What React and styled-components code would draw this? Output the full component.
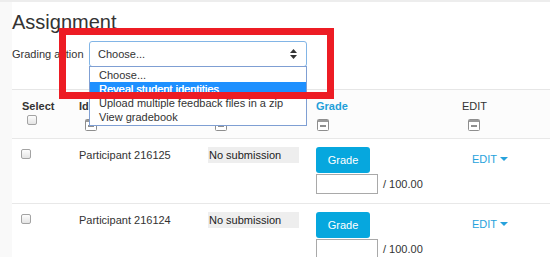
import React from "react";
import styled, { createGlobalStyle } from "styled-components";

const GlobalStyle = createGlobalStyle`
  body {
    margin: 0;
    background: #fff;
    font-family: "Liberation Sans", Arial, sans-serif;
    color: #333;
  }
`;

const participants = [
  { id: "216125", status: "No submission" },
  { id: "216124", status: "No submission" },
];

const options = [
  "Choose...",
  "Reveal student identities",
  "Upload multiple feedback files in a zip",
  "View gradebook",
];

const CollapseIcon = () => (
  <svg width="12" height="12" viewBox="0 0 12 12">
    <rect x="0.5" y="0.5" width="11" height="11" rx="1" fill="#fff" stroke="#8e8e8e" />
    <rect x="1" y="1" width="10" height="2" fill="#9a9a9a" />
    <rect x="3" y="6" width="6" height="2" fill="#8e8e8e" />
  </svg>
);

const SortArrows = () => (
  <svg width="7" height="10" viewBox="0 0 7 10">
    <path d="M3.5 0 L7 4 L0 4 Z" fill="#333" />
    <path d="M0 6 L7 6 L3.5 10 Z" fill="#333" />
  </svg>
);

const Caret = () => (
  <svg width="8" height="4" viewBox="0 0 8 4">
    <path d="M0 0 L8 0 L4 4 Z" fill="#27a2dc" />
  </svg>
);

const App = () => {
  return (
    <>
      <GlobalStyle />
      <Page>
        <Main>
          <Heading>Assignment</Heading>
          <ActionRow>
            <Label>Grading action</Label>
            <SelectWrap>
              <SelectBox>
                <span>Choose...</span>
                <SortArrows />
              </SelectBox>
              <Dropdown>
                {options.map((o, i) => (
                  <Option key={o} selected={i === 1}>
                    {o}
                  </Option>
                ))}
              </Dropdown>
            </SelectWrap>
          </ActionRow>

          <Table>
            <HeaderRow>
              <FirstCell>
                <HeadText>Select</HeadText>
                <Check style={{ marginLeft: 5 }} />
              </FirstCell>
              <Cell>
                <HeadText>Id</HeadText>
                <IconSlot offset={6}>
                  <CollapseIcon />
                </IconSlot>
              </Cell>
              <Cell>
                <HeadText />
                <IconSlot offset={7}>
                  <CollapseIcon />
                </IconSlot>
              </Cell>
              <Cell>
                <HeadText link>Grade</HeadText>
                <IconSlot offset={1}>
                  <CollapseIcon />
                </IconSlot>
              </Cell>
              <Cell>
                <HeadText plain>EDIT</HeadText>
                <IconSlot offset={6}>
                  <CollapseIcon />
                </IconSlot>
              </Cell>
            </HeaderRow>

            {participants.map((p) => (
              <BodyRow key={p.id}>
                <FirstCell>
                  <Check style={{ marginTop: 2, marginLeft: -1 }} />
                </FirstCell>
                <Cell>
                  <Text>Participant {p.id}</Text>
                </Cell>
                <Cell>
                  <Status>{p.status}</Status>
                </Cell>
                <Cell>
                  <GradeButton>Grade</GradeButton>
                  <GradeLine>
                    <GradeInput />
                    <OutOf>/ 100.00</OutOf>
                  </GradeLine>
                </Cell>
                <Cell>
                  <EditLink>
                    EDIT <Caret />
                  </EditLink>
                </Cell>
              </BodyRow>
            ))}
          </Table>
        </Main>
        <Highlight />
      </Page>
    </>
  );
};

const Page = styled.div`
  position: relative;
  height: 255px;
  overflow: hidden;
  background: #f9f9f9;
  border-top: 2px solid #ededed;
  padding-left: 12px;
`;

const Main = styled.div`
  background: #fff;
  height: 100%;
`;

const Heading = styled.h2`
  margin: 0;
  padding-top: 9px;
  font-size: 20px;
  line-height: 23px;
  font-weight: normal;
  color: #333;
`;

const ActionRow = styled.div`
  display: flex;
  align-items: center;
  height: 26px;
  margin-top: 7px;
`;

const Label = styled.label`
  font-size: 11px;
  width: 77px;
  color: #333;
`;

const SelectWrap = styled.div`
  position: relative;
  width: 218px;
  height: 26px;
`;

const SelectBox = styled.div`
  box-sizing: border-box;
  height: 26px;
  display: flex;
  align-items: center;
  justify-content: space-between;
  padding: 0 9px 0 8px;
  border: 1px solid #82b5e6;
  border-radius: 3px;
  font-size: 11px;
  color: #333;
  background: #fff;
`;

const Dropdown = styled.div`
  position: absolute;
  top: 25px;
  left: 0;
  width: 218px;
  box-sizing: border-box;
  border: 1px solid #7f9fd3;
  padding: 1px 0;
  background: #fff;
  z-index: 2;
`;

const Option = styled.div`
  height: 14px;
  line-height: 14px;
  padding-left: 9px;
  font-size: 11px;
  white-space: nowrap;
  color: ${(p) => (p.selected ? "#fff" : "#333")};
  background: ${(p) => (p.selected ? "#1e90ff" : "transparent")};
  text-shadow: ${(p) => (p.selected ? "0.3px 0 0 #fff" : "none")};
`;

const Table = styled.div`
  margin-top: 22px;
  border-top: 1px solid #e6e6e6;
`;

const Row = styled.div`
  display: grid;
  grid-template-columns: 67px 129px 108px 146px 1fr;
  border-bottom: 1px solid #e8e8e8;
`;

const HeaderRow = styled(Row)`
  box-sizing: border-box;
  height: 49px;
  padding-top: 10px;
  background: #fcfcfc;
`;

const BodyRow = styled(Row)`
  padding: 8px 0 9px;
  background: #fff;
`;

const Cell = styled.div`
  display: flex;
  flex-direction: column;
  align-items: flex-start;
`;

const FirstCell = styled(Cell)`
  padding-left: 10px;
`;

const HeadText = styled.div`
  height: 13px;
  font-size: 11px;
  line-height: 13px;
  font-weight: ${(p) => (p.plain ? "normal" : "bold")};
  color: ${(p) => (p.link ? "#1f9fd9" : "#333")};
  white-space: nowrap;
`;

const IconSlot = styled.div`
  margin-top: 4px;
  margin-left: ${(p) => p.offset}px;
  height: 12px;
`;

const Check = styled.span`
  display: block;
  box-sizing: border-box;
  width: 10px;
  height: 10px;
  margin-top: 2px;
  border: 1px solid #a3a3a3;
  border-radius: 2px;
  background: linear-gradient(#fdfdfd, #e4e4e4);
`;

const Text = styled.div`
  font-size: 11px;
  line-height: 16px;
  color: #333;
`;

const Status = styled.div`
  width: 90px;
  height: 16px;
  line-height: 16px;
  padding-left: 1px;
  font-size: 11px;
  color: #222;
  background: #eeeeee;
`;

const GradeButton = styled.div`
  width: 54px;
  height: 26px;
  line-height: 26px;
  text-align: center;
  font-size: 11px;
  color: #fff;
  background: #06a7de;
  border-radius: 3px;
`;

const GradeLine = styled.div`
  display: flex;
  align-items: center;
  margin-top: 1px;
`;

const GradeInput = styled.div`
  box-sizing: border-box;
  width: 62px;
  height: 20px;
  border: 1px solid #a9a9a9;
  background: #fff;
`;

const OutOf = styled.span`
  margin-left: 5px;
  font-size: 11px;
  color: #333;
`;

const EditLink = styled.div`
  display: flex;
  align-items: center;
  gap: 3px;
  margin-top: 4px;
  margin-left: 10px;
  font-size: 11px;
  line-height: 16px;
  color: #27a2dc;
`;

const Highlight = styled.div`
  position: absolute;
  left: 59px;
  top: 26px;
  width: 275px;
  height: 71px;
  box-sizing: border-box;
  border: 7px solid #ed1c24;
  z-index: 5;
`;

export default App;
